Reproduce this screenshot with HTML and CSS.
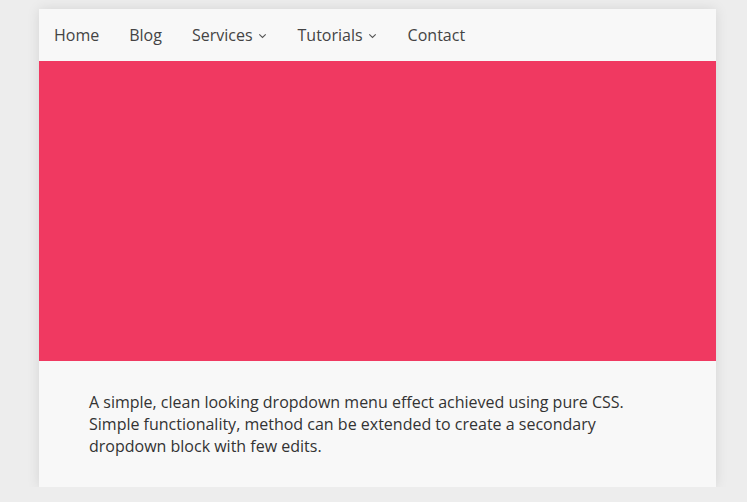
FILE: index.html
```html
<!DOCTYPE html>
<html lang="en">
<head>
    <meta charset="UTF-8">
    <meta name="viewport" content="width=device-width, initial-scale=1.0">
    <title>Pure CSS Dropdown</title>
    <link rel="stylesheet" href="styles.css">
</head>
<body>
    <div class="card">
        <nav class="menu">
            <a href="#">Home</a>
            <a href="#">Blog</a>
            <a href="#" class="has-sub">Services
                <svg class="chev" width="9" height="6" viewBox="0 0 9 6"><path d="M1.3 1.3 L4.5 4.5 L7.7 1.3" fill="none" stroke="#555" stroke-width="1.1"/></svg>
            </a>
            <a href="#" class="has-sub">Tutorials
                <svg class="chev" width="9" height="6" viewBox="0 0 9 6"><path d="M1.3 1.3 L4.5 4.5 L7.7 1.3" fill="none" stroke="#555" stroke-width="1.1"/></svg>
            </a>
            <a href="#">Contact</a>
        </nav>
        <div class="banner"></div>
        <p class="info">A simple, clean looking dropdown menu effect achieved using pure CSS. Simple functionality, method can be extended to create a secondary dropdown block with few edits.</p>
    </div>
</body>
</html>
```

FILE: styles.css
```css
body {
    margin: 0;
    background-color: #ededed;
    font-family: "Open Sans", sans-serif;
}
.card {
    width: 677px;
    margin: 9px 0 0 39px;
    background-color: #f8f8f8;
    box-shadow: 0 0 12px rgba(0, 0, 0, 0.1);
}
.menu {
    display: flex;
    height: 52px;
    align-items: center;
}
.menu a {
    padding: 0 15px;
    color: #444;
    font-size: 16px;
    text-decoration: none;
    display: flex;
    align-items: center;
}
.menu .chev {
    margin-left: 5px;
    margin-right: 1px;
    margin-top: 2px;
}
.banner {
    height: 300px;
    background-color: #f03961;
}
.info {
    margin: 0;
    padding: 30px 50px 30px 50px;
    font-size: 16px;
    line-height: 22px;
    color: #333;
}
```
